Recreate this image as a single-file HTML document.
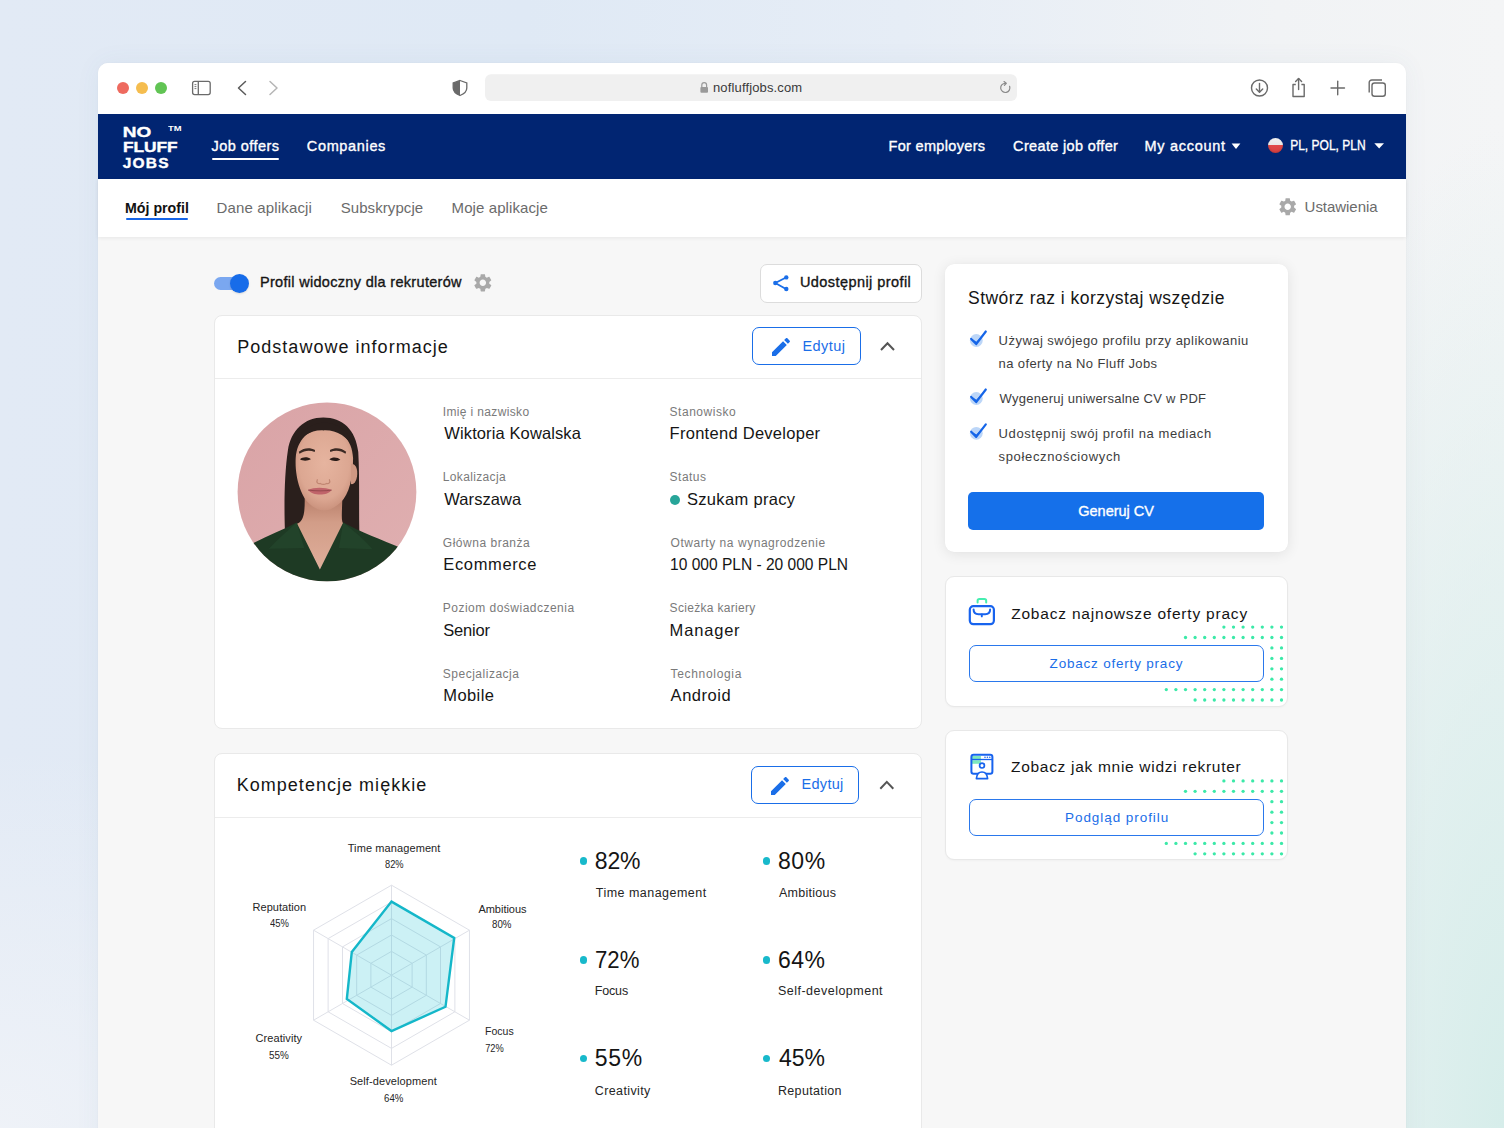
<!DOCTYPE html>
<html><head><meta charset="utf-8">
<style>
html,body{margin:0;padding:0;}
body{width:1504px;height:1128px;overflow:hidden;position:relative;font-family:"Liberation Sans",sans-serif;
background:
 radial-gradient(ellipse 260px 1000px at 1504px 1128px, rgba(214,237,234,1) 0%, rgba(218,238,236,0.75) 40%, rgba(230,240,241,0) 100%),
 radial-gradient(ellipse 500px 380px at 0px 1128px, rgba(240,243,248,0.9) 0%, rgba(240,243,248,0) 100%),
 linear-gradient(90deg,#e2eaf5 0%,#dfe9f5 35%,#e6edf6 60%,#f1f3f5 85%,#f4f5f6 100%);}
.a{position:absolute;}
.t{position:absolute;white-space:nowrap;line-height:1;}
.m{-webkit-text-stroke:0.35px currentColor;}
.b{font-weight:bold;}
.B{-webkit-text-stroke:0.4px currentColor;}
svg{position:absolute;overflow:visible;}
</style></head><body>

<div class="a" style="left:98px;top:63px;width:1308px;height:1100px;border-radius:10px;background:#f7f7f7;box-shadow:0 0 26px rgba(70,100,130,0.06),0 0 2px rgba(0,0,0,0.04);overflow:hidden">
</div>
<div class="a" style="left:98px;top:63px;width:1308px;height:51px;border-radius:10px 10px 0 0;background:#ffffff"></div>
<div class="a" style="left:98px;top:114px;width:1308px;height:65px;background:#012572"></div>
<div class="a" style="left:98px;top:179px;width:1308px;height:58px;background:#ffffff;box-shadow:0 1px 4px rgba(0,0,0,0.07)"></div>
<div class="a" style="left:117px;top:82px;width:12px;height:12px;border-radius:50%;background:#ee6a5f"></div>
<div class="a" style="left:136px;top:82px;width:12px;height:12px;border-radius:50%;background:#f5bd4f"></div>
<div class="a" style="left:155.4px;top:82px;width:12px;height:12px;border-radius:50%;background:#61c454"></div>
<svg style="left:0;top:0" width="1504" height="1128">
<rect x="192.6" y="81.4" width="17.6" height="13.2" rx="2" fill="none" stroke="#6a6a6a" stroke-width="1.3"/>
<line x1="198.3" y1="81.4" x2="198.3" y2="94.6" stroke="#6a6a6a" stroke-width="1.3"/>
<line x1="194.5" y1="84.6" x2="196.4" y2="84.6" stroke="#6a6a6a" stroke-width="0.9"/>
<line x1="194.5" y1="86.6" x2="196.4" y2="86.6" stroke="#6a6a6a" stroke-width="0.9"/>
<line x1="194.5" y1="88.6" x2="196.4" y2="88.6" stroke="#6a6a6a" stroke-width="0.9"/>
<polyline points="245.5,81.5 238.5,88 245.5,94.5" fill="none" stroke="#5a5a5a" stroke-width="1.5" stroke-linecap="round" stroke-linejoin="round"/>
<polyline points="270,81.5 277,88 270,94.5" fill="none" stroke="#b5b5b5" stroke-width="1.5" stroke-linecap="round" stroke-linejoin="round"/>
<path d="M460,80.5 L466.8,83 L466.8,88 C466.8,91.5 463.8,94 460,95.5 C456.2,94 453.2,91.5 453.2,88 L453.2,83 Z" fill="none" stroke="#6a6a6a" stroke-width="1.3"/>
<path d="M460,80.5 L453.2,83 L453.2,88 C453.2,91.5 456.2,94 460,95.5 Z" fill="#6a6a6a"/>
<rect x="485" y="74.3" width="532" height="26.6" rx="6" fill="#f0f0f0"/>
<rect x="700.4" y="87" width="7.6" height="5.8" rx="1" fill="#9a9a9a"/>
<path d="M701.8,87.2 V85 a2.4,2.4 0 0 1 4.8,0 V87.2" fill="none" stroke="#9a9a9a" stroke-width="1.2"/>
<path d="M1009.6,86.3 A4.6,4.6 0 1 1 1005.5,83.3" fill="none" stroke="#8a8a8a" stroke-width="1.2" stroke-linecap="round"/>
<polyline points="1004,81.6 1006.3,83.3 1004.4,85.3" fill="none" stroke="#8a8a8a" stroke-width="1.2" stroke-linecap="round" stroke-linejoin="round"/>
<circle cx="1259.5" cy="88" r="8" fill="none" stroke="#6a6a6a" stroke-width="1.4"/>
<line x1="1259.5" y1="83.5" x2="1259.5" y2="92" stroke="#6a6a6a" stroke-width="1.4" stroke-linecap="round"/>
<polyline points="1256.3,89 1259.5,92.2 1262.7,89" fill="none" stroke="#6a6a6a" stroke-width="1.4" stroke-linecap="round" stroke-linejoin="round"/>
<path d="M1295.8,84.5 H1293 V96.5 H1304.2 V84.5 H1301.4" fill="none" stroke="#6a6a6a" stroke-width="1.4" stroke-linejoin="round"/>
<line x1="1298.6" y1="78.6" x2="1298.6" y2="89.5" stroke="#6a6a6a" stroke-width="1.4" stroke-linecap="round"/>
<polyline points="1295.6,81.5 1298.6,78.5 1301.6,81.5" fill="none" stroke="#6a6a6a" stroke-width="1.4" stroke-linecap="round" stroke-linejoin="round"/>
<line x1="1331" y1="88" x2="1344.5" y2="88" stroke="#6a6a6a" stroke-width="1.4" stroke-linecap="round"/>
<line x1="1337.7" y1="81.3" x2="1337.7" y2="94.7" stroke="#6a6a6a" stroke-width="1.4" stroke-linecap="round"/>
<rect x="1372" y="83" width="13.3" height="13.3" rx="2.5" fill="#ffffff" stroke="#6a6a6a" stroke-width="1.4"/>
<path d="M1369.2,92.6 V82.6 a2.6,2.6 0 0 1 2.6,-2.6 H1382" fill="none" stroke="#6a6a6a" stroke-width="1.4"/>
</svg>
<div class="a" style="left:211.5px;top:157.6px;width:67.2px;height:2.6px;background:#fff;border-radius:1px"></div>
<svg style="left:0;top:0" width="1504" height="1128">
<polygon points="1231.6,143.5 1240.4,143.5 1236,149" fill="#fff"/>
<polygon points="1374.3,143.2 1384,143.2 1379.15,148.4" fill="#fff"/>
</svg>
<div class="a" style="left:1267.9px;top:138.3px;width:15px;height:15px;border-radius:50%;background:linear-gradient(#f2f2f2 0,#e8e8e8 48%,#e04a4a 50%,#d94040 100%);box-shadow:inset 0 -1px 2px rgba(0,0,0,0.15)"></div>
<div class="a" style="left:126px;top:217.8px;width:62.4px;height:2px;background:#1565e8;border-radius:1px"></div>
<div class="a" style="left:214px;top:314.5px;width:705.5px;height:412.5px;background:#fff;border:1px solid #e9e9e9;border-radius:8px"></div>
<div class="a" style="left:215px;top:378px;width:705.5px;height:1px;background:#ececec"></div>
<div class="a" style="left:214px;top:753px;width:705.5px;height:420px;background:#fff;border:1px solid #e9e9e9;border-radius:8px"></div>
<div class="a" style="left:215px;top:817px;width:705.5px;height:1px;background:#ececec"></div>
<div class="a" style="left:760px;top:264px;width:160px;height:36.5px;background:#fff;border:1px solid #dcdcdc;border-radius:7px"></div>
<div class="a" style="left:752px;top:327.3px;width:106.6px;height:36.2px;border:1.2px solid #1a6ee8;border-radius:7px;background:#fff"></div>
<div class="a" style="left:751.1px;top:766.1px;width:106.4px;height:36px;border:1.2px solid #1a6ee8;border-radius:7px;background:#fff"></div>
<div class="a" style="left:945px;top:263.7px;width:342.5px;height:288.5px;background:#fff;border-radius:9px;box-shadow:0 2px 14px rgba(0,0,0,0.09),0 0 1px rgba(0,0,0,0.05)"></div>
<div class="a" style="left:968.2px;top:492px;width:296px;height:38px;background:#1570ea;border-radius:5px"></div>
<div class="a" style="left:945px;top:575.8px;width:341px;height:129.4px;background:#fff;border:1px solid #e8e8e8;border-radius:9px;box-shadow:0 1px 2px rgba(0,0,0,0.03)"></div>
<div class="a" style="left:945px;top:730px;width:341px;height:128.3px;background:#fff;border:1px solid #e8e8e8;border-radius:9px;box-shadow:0 1px 2px rgba(0,0,0,0.03)"></div>
<svg style="left:0;top:0" width="1504" height="1128"><g fill="#3be9a8"><circle cx="1223.9" cy="627.1" r="1.65"/><circle cx="1233.5" cy="627.1" r="1.65"/><circle cx="1243.1" cy="627.1" r="1.65"/><circle cx="1252.7" cy="627.1" r="1.65"/><circle cx="1262.3" cy="627.1" r="1.65"/><circle cx="1271.9" cy="627.1" r="1.65"/><circle cx="1281.5" cy="627.1" r="1.65"/><circle cx="1185.5" cy="637.5" r="1.65"/><circle cx="1195.1" cy="637.5" r="1.65"/><circle cx="1204.7" cy="637.5" r="1.65"/><circle cx="1214.3" cy="637.5" r="1.65"/><circle cx="1223.9" cy="637.5" r="1.65"/><circle cx="1233.5" cy="637.5" r="1.65"/><circle cx="1243.1" cy="637.5" r="1.65"/><circle cx="1252.7" cy="637.5" r="1.65"/><circle cx="1262.3" cy="637.5" r="1.65"/><circle cx="1271.9" cy="637.5" r="1.65"/><circle cx="1281.5" cy="637.5" r="1.65"/><circle cx="1271.9" cy="647.9" r="1.65"/><circle cx="1281.5" cy="647.9" r="1.65"/><circle cx="1271.9" cy="658.4" r="1.65"/><circle cx="1281.5" cy="658.4" r="1.65"/><circle cx="1271.9" cy="668.8" r="1.65"/><circle cx="1281.5" cy="668.8" r="1.65"/><circle cx="1271.9" cy="679.2" r="1.65"/><circle cx="1281.5" cy="679.2" r="1.65"/><circle cx="1166.3" cy="689.6" r="1.65"/><circle cx="1175.9" cy="689.6" r="1.65"/><circle cx="1185.5" cy="689.6" r="1.65"/><circle cx="1195.1" cy="689.6" r="1.65"/><circle cx="1204.7" cy="689.6" r="1.65"/><circle cx="1214.3" cy="689.6" r="1.65"/><circle cx="1223.9" cy="689.6" r="1.65"/><circle cx="1233.5" cy="689.6" r="1.65"/><circle cx="1243.1" cy="689.6" r="1.65"/><circle cx="1252.7" cy="689.6" r="1.65"/><circle cx="1262.3" cy="689.6" r="1.65"/><circle cx="1271.9" cy="689.6" r="1.65"/><circle cx="1281.5" cy="689.6" r="1.65"/><circle cx="1195.1" cy="700.0" r="1.65"/><circle cx="1204.7" cy="700.0" r="1.65"/><circle cx="1214.3" cy="700.0" r="1.65"/><circle cx="1223.9" cy="700.0" r="1.65"/><circle cx="1233.5" cy="700.0" r="1.65"/><circle cx="1243.1" cy="700.0" r="1.65"/><circle cx="1252.7" cy="700.0" r="1.65"/><circle cx="1262.3" cy="700.0" r="1.65"/><circle cx="1271.9" cy="700.0" r="1.65"/><circle cx="1281.5" cy="700.0" r="1.65"/><circle cx="1223.9" cy="780.9" r="1.65"/><circle cx="1233.5" cy="780.9" r="1.65"/><circle cx="1243.1" cy="780.9" r="1.65"/><circle cx="1252.7" cy="780.9" r="1.65"/><circle cx="1262.3" cy="780.9" r="1.65"/><circle cx="1271.9" cy="780.9" r="1.65"/><circle cx="1281.5" cy="780.9" r="1.65"/><circle cx="1185.5" cy="791.3" r="1.65"/><circle cx="1195.1" cy="791.3" r="1.65"/><circle cx="1204.7" cy="791.3" r="1.65"/><circle cx="1214.3" cy="791.3" r="1.65"/><circle cx="1223.9" cy="791.3" r="1.65"/><circle cx="1233.5" cy="791.3" r="1.65"/><circle cx="1243.1" cy="791.3" r="1.65"/><circle cx="1252.7" cy="791.3" r="1.65"/><circle cx="1262.3" cy="791.3" r="1.65"/><circle cx="1271.9" cy="791.3" r="1.65"/><circle cx="1281.5" cy="791.3" r="1.65"/><circle cx="1271.9" cy="801.7" r="1.65"/><circle cx="1281.5" cy="801.7" r="1.65"/><circle cx="1271.9" cy="812.2" r="1.65"/><circle cx="1281.5" cy="812.2" r="1.65"/><circle cx="1271.9" cy="822.6" r="1.65"/><circle cx="1281.5" cy="822.6" r="1.65"/><circle cx="1271.9" cy="833.0" r="1.65"/><circle cx="1281.5" cy="833.0" r="1.65"/><circle cx="1166.3" cy="843.4" r="1.65"/><circle cx="1175.9" cy="843.4" r="1.65"/><circle cx="1185.5" cy="843.4" r="1.65"/><circle cx="1195.1" cy="843.4" r="1.65"/><circle cx="1204.7" cy="843.4" r="1.65"/><circle cx="1214.3" cy="843.4" r="1.65"/><circle cx="1223.9" cy="843.4" r="1.65"/><circle cx="1233.5" cy="843.4" r="1.65"/><circle cx="1243.1" cy="843.4" r="1.65"/><circle cx="1252.7" cy="843.4" r="1.65"/><circle cx="1262.3" cy="843.4" r="1.65"/><circle cx="1271.9" cy="843.4" r="1.65"/><circle cx="1281.5" cy="843.4" r="1.65"/><circle cx="1195.1" cy="853.8" r="1.65"/><circle cx="1204.7" cy="853.8" r="1.65"/><circle cx="1214.3" cy="853.8" r="1.65"/><circle cx="1223.9" cy="853.8" r="1.65"/><circle cx="1233.5" cy="853.8" r="1.65"/><circle cx="1243.1" cy="853.8" r="1.65"/><circle cx="1252.7" cy="853.8" r="1.65"/><circle cx="1262.3" cy="853.8" r="1.65"/><circle cx="1271.9" cy="853.8" r="1.65"/><circle cx="1281.5" cy="853.8" r="1.65"/></g></svg>
<div class="a" style="left:968.5px;top:645.1px;width:293.2px;height:35.2px;border:1.5px solid #2a78ec;border-radius:7px;background:#fff"></div>
<div class="a" style="left:968.5px;top:799.2px;width:293.2px;height:35.2px;border:1.5px solid #2a78ec;border-radius:7px;background:#fff"></div>
<div class="a" style="left:213.8px;top:276.6px;width:30px;height:13.4px;border-radius:7px;background:#7aa7f0"></div>
<div class="a" style="left:230.1px;top:273.8px;width:19px;height:19px;border-radius:50%;background:#176ce9;box-shadow:0 1px 2px rgba(0,0,0,0.12)"></div>
<div class="a" style="left:670px;top:494.6px;width:10px;height:10px;border-radius:50%;background:#27a599"></div>
<div class="a" style="left:580.0px;top:857.4px;width:7.2px;height:7.2px;border-radius:50%;background:#18b9cb"></div>
<div class="a" style="left:762.6px;top:857.4px;width:7.2px;height:7.2px;border-radius:50%;background:#18b9cb"></div>
<div class="a" style="left:580.0px;top:956.4px;width:7.2px;height:7.2px;border-radius:50%;background:#18b9cb"></div>
<div class="a" style="left:762.6px;top:956.4px;width:7.2px;height:7.2px;border-radius:50%;background:#18b9cb"></div>
<div class="a" style="left:580.0px;top:1054.9px;width:7.2px;height:7.2px;border-radius:50%;background:#18b9cb"></div>
<div class="a" style="left:762.6px;top:1054.9px;width:7.2px;height:7.2px;border-radius:50%;background:#18b9cb"></div>
<svg style="left:0;top:0" width="1504" height="1128"><polygon points="391.50,951.40 412.11,963.30 412.11,987.10 391.50,999.00 370.89,987.10 370.89,963.30" fill="none" stroke="#dfe1e8" stroke-width="1"/><polygon points="391.50,935.00 426.31,955.10 426.31,995.30 391.50,1015.40 356.69,995.30 356.69,955.10" fill="none" stroke="#dfe1e8" stroke-width="1"/><polygon points="391.50,918.60 440.52,946.90 440.52,1003.50 391.50,1031.80 342.48,1003.50 342.48,946.90" fill="none" stroke="#dfe1e8" stroke-width="1"/><polygon points="391.50,902.00 454.89,938.60 454.89,1011.80 391.50,1048.40 328.11,1011.80 328.11,938.60" fill="none" stroke="#dfe1e8" stroke-width="1"/><polygon points="391.50,885.20 469.44,930.20 469.44,1020.20 391.50,1065.20 313.56,1020.20 313.56,930.20" fill="none" stroke="#dfe1e8" stroke-width="1"/><line x1="391.5" y1="975.2" x2="391.50" y2="885.20" stroke="#dfe1e8" stroke-width="1"/><line x1="391.5" y1="975.2" x2="469.44" y2="930.20" stroke="#dfe1e8" stroke-width="1"/><line x1="391.5" y1="975.2" x2="469.44" y2="1020.20" stroke="#dfe1e8" stroke-width="1"/><line x1="391.5" y1="975.2" x2="391.50" y2="1065.20" stroke="#dfe1e8" stroke-width="1"/><line x1="391.5" y1="975.2" x2="313.56" y2="1020.20" stroke="#dfe1e8" stroke-width="1"/><line x1="391.5" y1="975.2" x2="313.56" y2="930.20" stroke="#dfe1e8" stroke-width="1"/><polygon points="391.5,901.6 454.2,938 445.5,1006.8 391.5,1031 346.8,999 351.8,951.9" fill="rgba(24,190,210,0.22)" stroke="#14b7c9" stroke-width="2.4" stroke-linejoin="miter"/></svg>
<svg style="left:230px;top:395px" width="195" height="195" viewBox="0 0 1128 1128">
<defs><clipPath id="pc"><circle cx="561" cy="561" r="517"/></clipPath>
<radialGradient id="sk" cx="0.5" cy="0.42" r="0.62"><stop offset="0" stop-color="#e6b49f"/><stop offset="0.7" stop-color="#dca792"/><stop offset="1" stop-color="#c68d78"/></radialGradient>
<linearGradient id="nk" x1="0" y1="0" x2="0" y2="1"><stop offset="0" stop-color="#b87e69"/><stop offset="0.35" stop-color="#d29d88"/><stop offset="1" stop-color="#dfae9a"/></linearGradient>
<linearGradient id="bg" x1="0" y1="0" x2="1" y2="1"><stop offset="0" stop-color="#d9a3a6"/><stop offset="1" stop-color="#e0b0b1"/></linearGradient>
</defs>
<g clip-path="url(#pc)">
<rect x="0" y="0" width="1128" height="1128" fill="url(#bg)"/>
<path d="M540,130 C430,130 352,205 335,320 C315,450 312,640 318,790 L748,790 C745,640 750,470 742,330 C728,200 650,130 540,130 Z" fill="#2a1f1c"/>
<path d="M432,590 C434,690 425,735 380,748 L520,1010 L660,748 C640,735 648,690 650,590 Z" fill="url(#nk)"/>
<path d="M545,195 C458,195 388,255 380,365 C374,480 412,590 462,632 C495,660 522,668 545,668 C570,668 603,656 640,622 C690,575 712,478 712,365 C708,255 638,195 545,195 Z" fill="url(#sk)"/>
<path d="M700,400 C728,395 740,430 735,470 C730,505 712,520 700,515 Z" fill="#cf9883"/>
<path d="M545,160 C470,160 395,210 365,310 C400,245 470,200 540,205 C612,200 680,240 718,310 C700,215 625,160 545,160 Z" fill="#2a1f1c"/>
<path d="M398,328 C428,305 462,303 492,318 L490,330 C462,318 432,320 402,340 Z" fill="#3b2a24"/>
<path d="M578,318 C608,303 642,305 672,328 L668,340 C640,320 610,318 580,330 Z" fill="#3b2a24"/>
<path d="M405,372 C420,358 450,356 468,372 C450,382 422,384 405,372 Z" fill="#2a1c18"/>
<path d="M575,372 C592,356 622,358 638,374 C620,384 592,384 575,372 Z" fill="#2a1c18"/>
<path d="M505,490 C498,505 508,515 522,512 C532,518 548,518 558,512 C572,515 582,505 575,490" fill="none" stroke="#c08672" stroke-width="7" stroke-linecap="round"/>
<path d="M452,550 C485,532 548,532 588,550 C565,585 478,585 452,550 Z" fill="#c0646a"/>
<path d="M452,550 C495,556 548,556 588,550" fill="none" stroke="#8e4449" stroke-width="5"/>
<path d="M110,870 C200,820 300,785 385,738 L520,1010 L655,738 C750,790 880,840 990,885 L1128,1128 L0,1128 Z" fill="#1e3a24"/>
<path d="M385,738 L430,885 L225,890 C270,840 330,790 385,738 Z" fill="#22432a"/>
<path d="M655,738 L630,885 L825,892 C780,840 720,790 655,738 Z" fill="#22432a"/>
</g>
</svg>
<svg style="left:1276.99px;top:196.39px" width="21.42" height="21.42" viewBox="0 0 24 24"><path d="M19.14 12.94c.04-.3.06-.61.06-.94 0-.32-.02-.64-.07-.94l2.03-1.58c.18-.14.23-.41.12-.61l-1.92-3.32c-.12-.22-.37-.29-.59-.22l-2.39.96c-.5-.38-1.03-.7-1.62-.94l-.36-2.54c-.04-.24-.24-.41-.48-.41h-3.84c-.24 0-.43.17-.47.41l-.36 2.54c-.59.24-1.13.57-1.62.94l-2.39-.96c-.22-.08-.47 0-.59.22L2.74 8.87c-.12.21-.08.47.12.61l2.03 1.58c-.05.3-.09.63-.09.94s.02.64.07.94l-2.03 1.58c-.18.14-.23.41-.12.61l1.92 3.32c.12.22.37.29.59.22l2.39-.96c.5.38 1.03.7 1.62.94l.36 2.54c.05.24.24.41.48.41h3.84c.24 0 .44-.17.47-.41l.36-2.54c.59-.24 1.13-.56 1.62-.94l2.39.96c.22.08.47 0 .59-.22l1.92-3.32c.12-.22.07-.47-.12-.61l-2.01-1.58zM12 15.6c-1.98 0-3.6-1.62-3.6-3.6s1.62-3.6 3.6-3.6 3.6 1.62 3.6 3.6-1.62 3.6-3.6 3.6z" fill="#a9a9a9"/></svg>
<svg style="left:471.77px;top:272.37px" width="21.66" height="21.66" viewBox="0 0 24 24"><path d="M19.14 12.94c.04-.3.06-.61.06-.94 0-.32-.02-.64-.07-.94l2.03-1.58c.18-.14.23-.41.12-.61l-1.92-3.32c-.12-.22-.37-.29-.59-.22l-2.39.96c-.5-.38-1.03-.7-1.62-.94l-.36-2.54c-.04-.24-.24-.41-.48-.41h-3.84c-.24 0-.43.17-.47.41l-.36 2.54c-.59.24-1.13.57-1.62.94l-2.39-.96c-.22-.08-.47 0-.59.22L2.74 8.87c-.12.21-.08.47.12.61l2.03 1.58c-.05.3-.09.63-.09.94s.02.64.07.94l-2.03 1.58c-.18.14-.23.41-.12.61l1.92 3.32c.12.22.37.29.59.22l2.39-.96c.5.38 1.03.7 1.62.94l.36 2.54c.05.24.24.41.48.41h3.84c.24 0 .44-.17.47-.41l.36-2.54c.59-.24 1.13-.56 1.62-.94l2.39.96c.22.08.47 0 .59-.22l1.92-3.32c.12-.22.07-.47-.12-.61l-2.01-1.58zM12 15.6c-1.98 0-3.6-1.62-3.6-3.6s1.62-3.6 3.6-3.6 3.6 1.62 3.6 3.6-1.62 3.6-3.6 3.6z" fill="#a9a9a9"/></svg>
<svg style="left:768.60px;top:335.00px" width="24" height="24" viewBox="0 0 24 24"><path d="M3 17.25V21h3.75L17.81 9.94l-3.75-3.75L3 17.25zM20.71 7.04c.39-.39.39-1.02 0-1.41l-2.34-2.34c-.39-.39-1.02-.39-1.41 0l-1.83 1.83 3.75 3.75 1.83-1.83z" fill="#1a6ee8"/></svg>
<svg style="left:768.00px;top:773.70px" width="24" height="24" viewBox="0 0 24 24"><path d="M3 17.25V21h3.75L17.81 9.94l-3.75-3.75L3 17.25zM20.71 7.04c.39-.39.39-1.02 0-1.41l-2.34-2.34c-.39-.39-1.02-.39-1.41 0l-1.83 1.83 3.75 3.75 1.83-1.83z" fill="#1a6ee8"/></svg>
<svg style="left:0;top:0" width="1504" height="1128">
<polyline points="881,350 887.5,343.2 894,350" fill="none" stroke="#555" stroke-width="2"/>
<polyline points="880.3,788.7 886.8,781.9 893.3,788.7" fill="none" stroke="#555" stroke-width="2"/>
<g stroke="#1a6ee8" stroke-width="1.8" fill="#1a6ee8">
<line x1="775.3" y1="283" x2="786" y2="277.5"/><line x1="775.3" y1="283" x2="786" y2="289"/>
<circle cx="775.3" cy="283" r="2.2" stroke="none"/><circle cx="786.3" cy="277.4" r="2.2" stroke="none"/><circle cx="786.3" cy="289" r="2.2" stroke="none"/>
</g>
</svg>
<svg style="left:0;top:0" width="1504" height="1128"><circle cx="976.3" cy="340.5" r="6.4" fill="#bcd6f8"/><path d="M970.6,338.1 L976.2,344.6 L986.2,331.1 L976.4,341.7 Z" fill="#1565e8"/><polyline points="971.2,338.9 976.2,344.1 985.8,331.5" fill="none" stroke="#1565e8" stroke-width="2.2" stroke-linejoin="round" stroke-linecap="round"/><circle cx="976.3" cy="398.5" r="6.4" fill="#bcd6f8"/><path d="M970.6,396.1 L976.2,402.6 L986.2,389.1 L976.4,399.7 Z" fill="#1565e8"/><polyline points="971.2,396.9 976.2,402.1 985.8,389.5" fill="none" stroke="#1565e8" stroke-width="2.2" stroke-linejoin="round" stroke-linecap="round"/><circle cx="976.3" cy="433.3" r="6.4" fill="#bcd6f8"/><path d="M970.6,430.90000000000003 L976.2,437.40000000000003 L986.2,423.90000000000003 L976.4,434.5 Z" fill="#1565e8"/><polyline points="971.2,431.7 976.2,436.90000000000003 985.8,424.3" fill="none" stroke="#1565e8" stroke-width="2.2" stroke-linejoin="round" stroke-linecap="round"/></svg>
<svg style="left:0;top:0" width="1504" height="1128">
<rect x="969.8" y="606.1" width="24.1" height="18.1" rx="3.6" fill="none" stroke="#1763ee" stroke-width="2.2"/>
<path d="M973.6,609.6 C973.6,612.6 975.5,614.3 978.5,614.3 H985.2 C988.2,614.3 990.1,612.6 990.1,609.6" fill="none" stroke="#1763ee" stroke-width="2" stroke-linecap="round"/>
<line x1="981.8" y1="614.5" x2="981.8" y2="616.4" stroke="#1763ee" stroke-width="1.9" stroke-linecap="round"/>
<path d="M977.6,602.6 V600.8 a1.8,1.8 0 0 1 1.8,-1.8 H984.4 a1.8,1.8 0 0 1 1.8,1.8 V602.6" fill="none" stroke="#45eeb0" stroke-width="2" stroke-linecap="round"/>
</svg>
<svg style="left:0;top:0" width="1504" height="1128">
<rect x="971.9" y="756" width="9" height="3" fill="#7de8bd"/>
<rect x="971.9" y="760.2" width="9" height="3.6" fill="#7de8bd"/>
<rect x="971.4" y="754.8" width="21" height="19" rx="2.2" fill="none" stroke="#1763ee" stroke-width="2"/>
<line x1="971.4" y1="759.5" x2="992.4" y2="759.5" stroke="#1763ee" stroke-width="1.3"/>
<circle cx="985" cy="757.3" r="0.8" fill="#1763ee"/><circle cx="987.4" cy="757.3" r="0.8" fill="#1763ee"/><circle cx="989.8" cy="757.3" r="0.8" fill="#1763ee"/>
<circle cx="982" cy="765.6" r="2.4" fill="none" stroke="#1763ee" stroke-width="1.7"/>
<path d="M976.4,778.6 C976.8,774.2 979,772 982,772 C985,772 987.2,774.2 987.6,778.6 Z" fill="#fff" stroke="#1763ee" stroke-width="1.7" stroke-linejoin="round"/>
</svg>
<div class="t" style="left:713.0px;top:81.2px;font-size:13px;letter-spacing:0.143px;color:#3a3a3a">nofluffjobs.com</div>
<div class="t m" style="left:211.5px;top:139.2px;font-size:14.5px;letter-spacing:0.467px;color:#ffffff">Job offers</div>
<div class="t m" style="left:306.8px;top:139.2px;font-size:14.5px;letter-spacing:0.65px;color:#ffffff">Companies</div>
<div class="t m" style="left:888.5px;top:139.0px;font-size:14.5px;letter-spacing:0.325px;color:#ffffff">For employers</div>
<div class="t m" style="left:1013.1px;top:139.0px;font-size:14.5px;letter-spacing:0.34px;color:#ffffff">Create job offer</div>
<div class="t m" style="left:1144.6px;top:139.0px;font-size:14.5px;letter-spacing:0.7px;color:#ffffff">My account</div>
<div class="t m" style="left:1290.3px;top:138.7px;font-size:13.8px;transform:scaleX(0.872);transform-origin:1px 0;color:#ffffff">PL, POL, PLN</div>
<div class="t b" style="left:125.0px;top:199.8px;font-size:15px;transform:scaleX(0.945);transform-origin:1px 0;color:#111111">Mój profil</div>
<div class="t" style="left:216.5px;top:199.6px;font-size:15px;letter-spacing:0.154px;color:#6b6b6b">Dane aplikacji</div>
<div class="t" style="left:340.7px;top:199.6px;font-size:15px;letter-spacing:0.08px;color:#6b6b6b">Subskrypcje</div>
<div class="t" style="left:451.6px;top:199.6px;font-size:15px;letter-spacing:0.092px;color:#6b6b6b">Moje aplikacje</div>
<div class="t" style="left:1304.6px;top:199.3px;font-size:15px;letter-spacing:-0.044px;color:#6b6b6b">Ustawienia</div>
<div class="t m" style="left:259.9px;top:275.4px;font-size:14.5px;letter-spacing:0.314px;color:#151515">Profil widoczny dla rekruterów</div>
<div class="t m" style="left:799.9px;top:275.3px;font-size:14.5px;letter-spacing:0.431px;color:#151515">Udostępnij profil</div>
<div class="t" style="left:237.2px;top:337.6px;font-size:18px;letter-spacing:1.025px;color:#151515">Podstawowe informacje</div>
<div class="t" style="left:802.5px;top:339.1px;font-size:14.5px;letter-spacing:0.42px;color:#1a6ee8">Edytuj</div>
<div class="t" style="left:442.8px;top:405.8px;font-size:12px;letter-spacing:0.357px;color:#7a7a7a">Imię i nazwisko</div>
<div class="t" style="left:669.6px;top:405.8px;font-size:12px;letter-spacing:0.522px;color:#7a7a7a">Stanowisko</div>
<div class="t" style="left:444.3px;top:425.0px;font-size:16.5px;letter-spacing:0.113px;color:#151515">Wiktoria Kowalska</div>
<div class="t" style="left:669.6px;top:425.0px;font-size:16.5px;letter-spacing:0.276px;color:#151515">Frontend Developer</div>
<div class="t" style="left:442.8px;top:471.3px;font-size:12px;letter-spacing:0.35px;color:#7a7a7a">Lokalizacja</div>
<div class="t" style="left:669.6px;top:471.3px;font-size:12px;letter-spacing:0.48px;color:#7a7a7a">Status</div>
<div class="t" style="left:444.3px;top:490.5px;font-size:16.5px;letter-spacing:0.086px;color:#151515">Warszawa</div>
<div class="t" style="left:686.9px;top:490.5px;font-size:16.5px;letter-spacing:0.336px;color:#151515">Szukam pracy</div>
<div class="t" style="left:442.8px;top:536.8px;font-size:12px;letter-spacing:0.517px;color:#7a7a7a">Główna branża</div>
<div class="t" style="left:670.6px;top:536.8px;font-size:12px;letter-spacing:0.543px;color:#7a7a7a">Otwarty na wynagrodzenie</div>
<div class="t" style="left:443.3px;top:556.0px;font-size:16.5px;letter-spacing:0.637px;color:#151515">Ecommerce</div>
<div class="t" style="left:669.6px;top:556.0px;font-size:16.5px;transform:scaleX(0.942);transform-origin:1px 0;color:#151515">10 000 PLN - 20 000 PLN</div>
<div class="t" style="left:442.8px;top:602.3px;font-size:12px;letter-spacing:0.484px;color:#7a7a7a">Poziom doświadczenia</div>
<div class="t" style="left:669.6px;top:602.3px;font-size:12px;letter-spacing:0.307px;color:#7a7a7a">Scieżka kariery</div>
<div class="t" style="left:443.3px;top:621.5px;font-size:16.5px;letter-spacing:-0.22px;color:#151515">Senior</div>
<div class="t" style="left:669.6px;top:621.5px;font-size:16.5px;letter-spacing:0.817px;color:#151515">Manager</div>
<div class="t" style="left:442.8px;top:667.8px;font-size:12px;letter-spacing:0.508px;color:#7a7a7a">Specjalizacja</div>
<div class="t" style="left:670.6px;top:667.8px;font-size:12px;letter-spacing:0.67px;color:#7a7a7a">Technologia</div>
<div class="t" style="left:443.3px;top:687.0px;font-size:16.5px;letter-spacing:0.4px;color:#151515">Mobile</div>
<div class="t" style="left:670.6px;top:687.0px;font-size:16.5px;letter-spacing:0.533px;color:#151515">Android</div>
<div class="t" style="left:968.0px;top:290.1px;font-size:17.5px;letter-spacing:0.477px;color:#151515">Stwórz raz i korzystaj wszędzie</div>
<div class="t" style="left:998.6px;top:334.4px;font-size:13px;letter-spacing:0.466px;color:#3d3d3d">Używaj swójego profilu przy aplikowaniu</div>
<div class="t" style="left:998.6px;top:357.4px;font-size:13px;letter-spacing:0.396px;color:#3d3d3d">na oferty na No Fluff Jobs</div>
<div class="t" style="left:999.6px;top:392.4px;font-size:13px;letter-spacing:0.245px;color:#3d3d3d">Wygeneruj uniwersalne CV w PDF</div>
<div class="t" style="left:998.6px;top:427.1px;font-size:13px;letter-spacing:0.591px;color:#3d3d3d">Udostępnij swój profil na mediach</div>
<div class="t" style="left:998.6px;top:450.3px;font-size:13px;letter-spacing:0.65px;color:#3d3d3d">społecznościowych</div>
<div class="t m" style="left:1078.3px;top:503.7px;font-size:14.5px;letter-spacing:-0.011px;color:#ffffff">Generuj CV</div>
<div class="t" style="left:1011.2px;top:606.0px;font-size:15.5px;letter-spacing:0.796px;color:#151515">Zobacz najnowsze oferty pracy</div>
<div class="t" style="left:1049.6px;top:657.2px;font-size:13.5px;letter-spacing:0.794px;color:#1a6ee8">Zobacz oferty pracy</div>
<div class="t" style="left:1011.0px;top:758.7px;font-size:15.5px;letter-spacing:0.7px;color:#151515">Zobacz jak mnie widzi rekruter</div>
<div class="t" style="left:1065.0px;top:810.6px;font-size:13.5px;letter-spacing:0.943px;color:#1a6ee8">Podgląd profilu</div>
<div class="t" style="left:236.7px;top:776.3px;font-size:18px;letter-spacing:1.028px;color:#151515">Kompetencje miękkie</div>
<div class="t" style="left:801.5px;top:777.4px;font-size:14.5px;letter-spacing:0.3px;color:#1a6ee8">Edytuj</div>
<div class="t" style="left:347.7px;top:843.2px;font-size:11px;letter-spacing:0.1px;color:#252525">Time management</div>
<div class="t" style="left:384.6px;top:858.5px;font-size:11px;transform:scaleX(0.845);transform-origin:0px 0;color:#252525">82%</div>
<div class="t" style="left:252.6px;top:902.4px;font-size:11px;letter-spacing:0.022px;color:#252525">Reputation</div>
<div class="t" style="left:270.0px;top:917.9px;font-size:11px;transform:scaleX(0.859);transform-origin:0px 0;color:#252525">45%</div>
<div class="t" style="left:478.4px;top:903.9px;font-size:11px;letter-spacing:-0.013px;color:#252525">Ambitious</div>
<div class="t" style="left:492.3px;top:919.4px;font-size:11px;transform:scaleX(0.882);transform-origin:0px 0;color:#252525">80%</div>
<div class="t" style="left:255.6px;top:1032.7px;font-size:11px;letter-spacing:0.067px;color:#252525">Creativity</div>
<div class="t" style="left:269.0px;top:1049.6px;font-size:11px;transform:scaleX(0.900);transform-origin:1px 0;color:#252525">55%</div>
<div class="t" style="left:485.0px;top:1026.2px;font-size:11px;transform:scaleX(0.955);transform-origin:1px 0;color:#252525">Focus</div>
<div class="t" style="left:485.0px;top:1043.2px;font-size:11px;transform:scaleX(0.843);transform-origin:1px 0;color:#252525">72%</div>
<div class="t" style="left:349.7px;top:1075.5px;font-size:11px;letter-spacing:0.093px;color:#252525">Self-development</div>
<div class="t" style="left:383.6px;top:1092.5px;font-size:11px;transform:scaleX(0.876);transform-origin:1px 0;color:#252525">64%</div>
<div class="t" style="left:594.8px;top:849.7px;font-size:23px;letter-spacing:-0.2px;color:#151515">82%</div>
<div class="t" style="left:595.8px;top:886.8px;font-size:12.5px;letter-spacing:0.471px;color:#252525">Time management</div>
<div class="t" style="left:777.9px;top:849.7px;font-size:23px;letter-spacing:0.6px;color:#151515">80%</div>
<div class="t" style="left:778.9px;top:886.8px;font-size:12.5px;letter-spacing:0.275px;color:#252525">Ambitious</div>
<div class="t" style="left:594.8px;top:948.5px;font-size:23px;transform:scaleX(0.964);transform-origin:1px 0;color:#151515">72%</div>
<div class="t" style="left:594.8px;top:985.4px;font-size:12.5px;letter-spacing:-0.175px;color:#252525">Focus</div>
<div class="t" style="left:777.9px;top:948.5px;font-size:23px;letter-spacing:0.55px;color:#151515">64%</div>
<div class="t" style="left:777.9px;top:985.4px;font-size:12.5px;letter-spacing:0.493px;color:#252525">Self-development</div>
<div class="t" style="left:594.8px;top:1046.5px;font-size:23px;letter-spacing:0.65px;color:#151515">55%</div>
<div class="t" style="left:594.8px;top:1084.9px;font-size:12.5px;letter-spacing:0.378px;color:#252525">Creativity</div>
<div class="t" style="left:778.9px;top:1046.5px;font-size:23px;letter-spacing:0.05px;color:#151515">45%</div>
<div class="t" style="left:777.9px;top:1084.9px;font-size:12.5px;letter-spacing:0.356px;color:#252525">Reputation</div>
<div class="t b B" style="left:122.7px;top:124.0px;font-size:15.5px;transform:scaleX(1.223);transform-origin:1px 0;color:#ffffff">NO</div>
<div class="t b B" style="left:122.7px;top:139.4px;font-size:15.5px;transform:scaleX(1.117);transform-origin:1px 0;color:#ffffff">FLUFF</div>
<div class="t b B" style="left:122.8px;top:154.6px;font-size:15.5px;letter-spacing:1.167px;color:#ffffff">JOBS</div>
<div class="t b" style="left:168.2px;top:124.8px;font-size:7.5px;transform:scaleX(1.250);transform-origin:0px 0;color:#ffffff">TM</div>
</body></html>
